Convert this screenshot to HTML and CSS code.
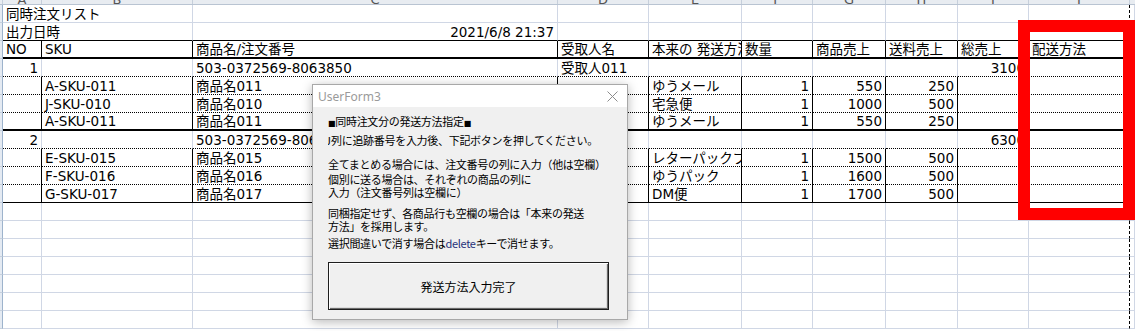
FILE: index.html
```html
<!DOCTYPE html>
<html lang="ja">

<head>
  <meta charset="UTF-8" />
  <title>同時注文リスト</title>
  <link rel="stylesheet" href="styles.css">
</head>

<body>

  <div class="sheet">

    <!-- column letters, cut off at the top -->
    <div class="col-head">
      <span class="ch ch-rh"></span>
      <span class="ch ch-a">A</span>
      <span class="ch ch-b">B</span>
      <span class="ch ch-c">C</span>
      <span class="ch ch-d">D</span>
      <span class="ch ch-e">E</span>
      <span class="ch ch-f">F</span>
      <span class="ch ch-g">G</span>
      <span class="ch ch-h">H</span>
      <span class="ch ch-i">I</span>
      <span class="ch ch-j">J</span>
      <span class="ch ch-k"></span>
    </div>

    <table class="grid">
      <colgroup>
        <col class="w-rh"><col class="w-a"><col class="w-b"><col class="w-c"><col class="w-d"><col class="w-e">
        <col class="w-f"><col class="w-g"><col class="w-h"><col class="w-i"><col class="w-j"><col class="w-k">
      </colgroup>

      <tr>
        <td class="rh"></td>
        <td colspan="2">同時注文リスト</td>
        <td></td><td></td><td></td><td></td><td></td><td></td><td></td><td class="pb"></td><td></td>
      </tr>
      <tr class="above-head">
        <td class="rh"></td>
        <td colspan="2">出力日時</td>
        <td class="num">2021/6/8 21:37</td>
        <td></td><td></td><td></td><td></td><td></td><td></td><td class="pb"></td><td></td>
      </tr>

      <!-- header -->
      <tr class="head">
        <td class="rh"></td>
        <td>NO</td><td>SKU</td><td>商品名/注文番号</td><td>受取人名</td><td>本来の 発送方法</td>
        <td>数量</td><td>商品売上</td><td>送料売上</td><td>総売上</td><td class="pb">配送方法</td><td class="off"></td>
      </tr>

      <!-- order 1 -->
      <tr class="order">
        <td class="rh"></td>
        <td class="num">1</td><td></td><td>503-0372569-8063850</td><td>受取人011</td><td></td>
        <td></td><td></td><td></td><td class="num">3100</td><td class="pb"></td><td class="off"></td>
      </tr>
      <tr class="item">
        <td class="rh"></td>
        <td></td><td>A-SKU-011</td><td>商品名011</td><td></td><td>ゆうメール</td>
        <td class="num">1</td><td class="num">550</td><td class="num">250</td><td></td><td class="pb"></td><td class="off"></td>
      </tr>
      <tr class="item">
        <td class="rh"></td>
        <td></td><td>J-SKU-010</td><td>商品名010</td><td></td><td>宅急便</td>
        <td class="num">1</td><td class="num">1000</td><td class="num">500</td><td></td><td class="pb"></td><td class="off"></td>
      </tr>
      <tr class="item last-thick">
        <td class="rh"></td>
        <td></td><td>A-SKU-011</td><td>商品名011</td><td></td><td>ゆうメール</td>
        <td class="num">1</td><td class="num">550</td><td class="num">250</td><td></td><td class="pb"></td><td class="off"></td>
      </tr>

      <!-- order 2 -->
      <tr class="order">
        <td class="rh"></td>
        <td class="num">2</td><td></td><td>503-0372569-8063851</td><td>受取人015</td><td></td>
        <td></td><td></td><td></td><td class="num">6300</td><td class="pb"></td><td class="off"></td>
      </tr>
      <tr class="item">
        <td class="rh"></td>
        <td></td><td>E-SKU-015</td><td>商品名015</td><td></td><td>レターパックプラス</td>
        <td class="num">1</td><td class="num">1500</td><td class="num">500</td><td></td><td class="pb"></td><td class="off"></td>
      </tr>
      <tr class="item">
        <td class="rh"></td>
        <td></td><td>F-SKU-016</td><td>商品名016</td><td></td><td>ゆうパック</td>
        <td class="num">1</td><td class="num">1600</td><td class="num">500</td><td></td><td class="pb"></td><td class="off"></td>
      </tr>
      <tr class="item last">
        <td class="rh"></td>
        <td></td><td>G-SKU-017</td><td>商品名017</td><td></td><td>DM便</td>
        <td class="num">1</td><td class="num">1700</td><td class="num">500</td><td></td><td class="pb"></td><td class="off"></td>
      </tr>

      <!-- empty rows -->
      <tr><td class="rh"></td><td></td><td></td><td></td><td></td><td></td><td></td><td></td><td></td><td></td><td class="pb"></td><td></td></tr>
      <tr><td class="rh"></td><td></td><td></td><td></td><td></td><td></td><td></td><td></td><td></td><td></td><td class="pb"></td><td></td></tr>
      <tr><td class="rh"></td><td></td><td></td><td></td><td></td><td></td><td></td><td></td><td></td><td></td><td class="pb"></td><td></td></tr>
      <tr><td class="rh"></td><td></td><td></td><td></td><td></td><td></td><td></td><td></td><td></td><td></td><td class="pb"></td><td></td></tr>
      <tr><td class="rh"></td><td></td><td></td><td></td><td></td><td></td><td></td><td></td><td></td><td></td><td class="pb"></td><td></td></tr>
      <tr><td class="rh"></td><td></td><td></td><td></td><td></td><td></td><td></td><td></td><td></td><td></td><td class="pb"></td><td></td></tr>
      <tr><td class="rh"></td><td></td><td></td><td></td><td></td><td></td><td></td><td></td><td></td><td></td><td class="pb"></td><td></td></tr>
    </table>

    <!-- UserForm over the sheet -->
    <div class="userform">
      <div class="uf-title">
        <span>UserForm3</span>
        <svg class="uf-close" width="11" height="11" viewBox="0 0 11 11">
          <path d="M0.5 0.5 L10.5 10.5 M10.5 0.5 L0.5 10.5" stroke="#8c8c8c" stroke-width="1" fill="none" />
        </svg>
      </div>
      <div class="uf-body">
        <div class="msg"><span class="sq">■</span>同時注文分の発送方法指定<span class="sq">■</span></div>
        <div class="msg gap-s"><span class="cut">J</span>列に追跡番号を入力後、下記ボタンを押してください。</div>
        <div class="msg gap-xl">全てまとめる場合には、注文番号の列に入力（他は空欄）</div>
        <div class="msg gap-xs">個別に送る場合は、それぞれの商品の列に<br>入力（注文番号列は空欄に）</div>
        <div class="msg gap-m">同梱指定せず、各商品行も空欄の場合は「本来の発送<br>方法」を採用します。</div>
        <div class="msg gap-s">選択間違いで消す場合は<span class="key">delete</span>キーで消せます。</div>
        <button class="uf-btn">発送方法入力完了</button>
      </div>
    </div>

    <!-- red annotation box -->
    <div class="highlight"></div>

  </div>

</body>

</html>
```

FILE: styles.css
```css
/* Base */
* {
  margin: 0;
  padding: 0;
  box-sizing: border-box;
}

html,
body {
  width: 1135px;
  height: 331px;
  overflow: hidden;
  background: #fff;
  color: #000;
  font-family: 'DejaVu Sans', 'Noto Sans CJK JP', sans-serif;
}

.sheet {
  position: relative;
  width: 1135px;
  height: 331px;
  overflow: hidden;
}

/* Column letters strip */
.col-head {
  display: flex;
  height: 5px;
  overflow: hidden;
  background: #e8ecf1;
  border-bottom: 1px solid #b9c4d2;
}

.ch {
  flex: none;
  height: 5px;
  border-right: 1px solid #c6cfdb;
  font-size: 13px;
  line-height: 0;
  color: #555;
  text-align: center;
}

.ch-rh { width: 3px; }
.ch-a { width: 39px; }
.ch-b { width: 151px; }
.ch-c { width: 365px; }
.ch-d { width: 91px; }
.ch-e { width: 93px; }
.ch-f { width: 71px; }
.ch-g { width: 73px; }
.ch-h { width: 72px; }
.ch-i { width: 71px; }
.ch-j { width: 101px; }
.ch-k { width: 5px; border-right: none; }

/* Grid */
.grid {
  table-layout: fixed;
  width: 1135px;
  border-collapse: separate;
  border-spacing: 0;
  font-size: 13.5px;
}

.w-rh { width: 3px; }
.w-a { width: 39px; }
.w-b { width: 151px; }
.w-c { width: 365px; }
.w-d { width: 91px; }
.w-e { width: 93px; }
.w-f { width: 71px; }
.w-g { width: 73px; }
.w-h { width: 72px; }
.w-i { width: 71px; }
.w-j { width: 101px; }
.w-k { width: 5px; }

.grid tr {
  height: 18px;
}

.grid td {
  height: 18px;
  padding: 0 2px 0 3px;
  line-height: 16px;
  vertical-align: bottom;
  white-space: nowrap;
  overflow: hidden;
  border-right: 1px solid #d0d7e5;
  border-bottom: 1px solid #d0d7e5;
}

.grid td.num {
  text-align: right;
  padding-right: 3px;
}

/* page break */
.grid td.pb {
  border-right: 1px dashed #000;
}

/* top line of the header */
.above-head td {
  border-bottom-color: #000;
}

.above-head td:last-child {
  border-bottom-color: #d0d7e5;
}

.head td {
  border-right-color: #000;
  border-bottom: 2px solid #000;
}

.order td {
  border-bottom: 1px dotted #000;
}

.item td {
  border-right-color: #000;
  border-bottom: 1px dotted #000;
}

.item.last-thick td {
  border-bottom: 2px solid #000;
}

.item.last td {
  border-bottom: 1px solid #000;
}

.grid tr td.off {
  border-right-color: #d0d7e5;
  border-bottom: 1px solid #d0d7e5;
}

.grid tr td.rh {
  padding: 0;
  background: #e4eaf2;
  border-right: 1px solid #9db3cc;
  border-bottom: 1px solid #c6d0dd;
}

/* UserForm */
.userform {
  position: absolute;
  left: 312px;
  top: 84px;
  width: 316px;
  height: 236px;
  background: #f0f0f0;
  border: 1px solid #a8a8a8;
  box-shadow: 0 2px 10px rgba(0, 0, 0, 0.28);
  font-family: 'Noto Sans CJK JP', sans-serif;
}

.uf-title {
  display: flex;
  align-items: center;
  justify-content: space-between;
  height: 22px;
  padding: 0 9px 0 5px;
  background: #fff;
  font-family: 'Noto Sans', sans-serif;
  font-size: 12px;
  color: #9a9a9a;
}

.uf-body {
  display: flex;
  flex-direction: column;
  padding: 8px 0 0 15px;
  font-size: 11px;
  line-height: 13px;
  letter-spacing: -0.3px;
  color: #000;
}

.msg {
  white-space: nowrap;
}

.gap-xs { margin-top: 2px; }
.gap-s { margin-top: 4px; }
.gap-m { margin-top: 8px; }
.gap-xl { margin-top: 11px; }

.sq {
  font-family: 'DejaVu Sans', sans-serif;
  font-size: 8px;
}

.cut {
  display: inline-block;
  width: 3px;
  overflow: hidden;
  vertical-align: bottom;
  text-indent: -3px;
}

.key {
  color: #26307a;
}

.uf-btn {
  margin-top: 12px;
  width: 281px;
  height: 48px;
  background: #f0f0f0;
  border: 1px solid #1e1e1e;
  box-shadow: inset 1px 1px #fff, inset -1px -1px #6a6a6a, inset -2px -2px #dcdcdc;
  font-family: 'Noto Sans CJK JP', sans-serif;
  font-size: 12px;
  color: #000;
}

/* Red annotation */
.highlight {
  position: absolute;
  left: 1018px;
  top: 20px;
  width: 117px;
  height: 200px;
  border: 12px solid #ff0000;
}
```
